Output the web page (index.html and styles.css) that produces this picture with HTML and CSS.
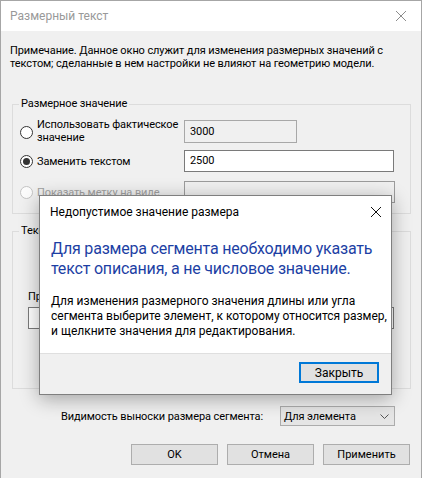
FILE: index.html
```html
<!DOCTYPE html>
<html lang="ru">
<head>
<meta charset="utf-8">
<title>Размерный текст</title>
<link rel="stylesheet" href="styles.css">
</head>
<body>
<div class="window">
  <div class="titlebar">
    <span class="title">Размерный текст</span>
    <svg class="close" width="12" height="12" viewBox="0 0 12 12"><path d="M1 1 L11 11 M11 1 L1 11" /></svg>
  </div>

  <div class="client">
    <p class="note">Примечание. Данное окно служит для изменения размерных значений с<br>текстом; сделанные в нем настройки не влияют на геометрию модели.</p>

    <fieldset class="group group-value">
      <legend>Размерное значение</legend>
      <div class="row row-actual">
        <label class="choice"><span class="radio"></span><span class="choice-text">Использовать фактическое<br>значение</span></label>
        <div class="field field-disabled field-short">3000</div>
      </div>
      <div class="row row-replace">
        <label class="choice"><span class="radio checked"></span><span class="choice-text">Заменить текстом</span></label>
        <div class="field field-wide">2500</div>
      </div>
      <div class="row row-label">
        <label class="choice choice-disabled"><span class="radio disabled"></span><span class="choice-text">Показать метку на виде</span></label>
        <div class="field field-inactive field-wider"></div>
      </div>
    </fieldset>

    <fieldset class="group group-text">
      <legend>Текстовые поля</legend>
      <div class="text-cols">
        <div class="text-col">
          <span class="col-label">Префикс:</span>
          <div class="field"></div>
        </div>
        <div class="text-col">
          <span class="col-label"></span>
          <div class="field field-disabled"></div>
        </div>
        <div class="text-col">
          <span class="col-label"></span>
          <div class="field"></div>
        </div>
      </div>
    </fieldset>

    <div class="leader-row">
      <span class="leader-label">Видимость выноски размера сегмента:</span>
      <div class="combo">
        <span>Для элемента</span>
        <svg class="chevron" width="9" height="5" viewBox="0 0 9 5"><path d="M0.5 0.5 L4.5 4.5 L8.5 0.5" /></svg>
      </div>
    </div>

    <div class="buttons">
      <button class="btn">OK</button>
      <button class="btn">Отмена</button>
      <button class="btn">Применить</button>
    </div>
  </div>

  <div class="modal">
    <div class="modal-head">
      <span class="modal-title">Недопустимое значение размера</span>
      <svg class="modal-close" width="12" height="12" viewBox="0 0 12 12"><path d="M1 1 L11 11 M11 1 L1 11" /></svg>
    </div>
    <div class="modal-body">
      <p class="instruction">Для размера сегмента необходимо указать<br>текст описания, а не числовое значение.</p>
      <p class="detail">Для изменения размерного значения длины или угла<br>сегмента выберите элемент, к которому относится размер,<br>и щелкните значения для редактирования.</p>
    </div>
    <div class="modal-foot">
      <button class="btn btn-default">Закрыть</button>
    </div>
  </div>
</div>
</body>
</html>
```

FILE: styles.css
```css
* {
  box-sizing: border-box;
}

html, body {
  margin: 0;
  padding: 0;
  background: #f0f0f0;
}

body {
  font-family: Roboto, "Liberation Sans", sans-serif;
  font-size: 12px;
  color: #000;
  white-space: nowrap;
}

.window {
  position: relative;
  width: 422px;
  height: 478px;
  border: 1px solid #a6a6a6;
  border-bottom: none;
  background: #f0f0f0;
  overflow: hidden;
}

/* title bar */
.titlebar {
  height: 30px;
  background: #fff;
  display: flex;
  align-items: center;
  justify-content: space-between;
  padding: 0 14px 0 9px;
}

.title {
  color: #999;
  font-size: 12px;
}

.close path,
.modal-close path {
  stroke: #8c8c8c;
  stroke-width: 1;
  fill: none;
}

.modal-close path {
  stroke: #111;
}

/* dialog body: the main dialog uses the smaller 11px face */
.client {
  padding: 13px 0 0 0;
  font-size: 11px;
  letter-spacing: -0.1px;
}

.note {
  margin: 0 0 0 9px;
  line-height: 13px;
  color: #000;
}

.group {
  margin: 27px 10px 0 11px;
  padding: 0;
  border: 1px solid #dcdcdc;
  min-width: 0;
}

.group legend {
  margin-left: 6px;
  padding: 0 2px;
  line-height: 14px;
}

.group-value {
  padding-bottom: 8px;
}

.row {
  display: flex;
  align-items: center;
  height: 26px;
}

.row-actual { margin-top: 7px; }
.row-replace { margin-top: 4px; }
.row-label { margin-top: 5px; }

.choice {
  width: 164px;
  margin-left: 7px;
  display: flex;
  align-items: center;
  gap: 4px;
  line-height: 13px;
}

.choice-disabled {
  color: #a0a0a0;
}

.radio {
  position: relative;
  flex: none;
  width: 13px;
  height: 13px;
  border-radius: 50%;
  border: 1px solid #333;
  background: #fff;
}

.row-actual .radio {
  margin-top: 3px;
}

.radio.checked::after {
  content: "";
  position: absolute;
  left: 2px;
  top: 2px;
  width: 7px;
  height: 7px;
  border-radius: 50%;
  background: #333;
}

.radio.disabled {
  border-color: #c4c4c4;
  background: #fcfcfc;
}

.field {
  height: 22px;
  border: 1px solid #7a7a7a;
  background: #fff;
  padding: 0 5px;
  line-height: 20px;
}

.field-disabled {
  background: #f0f0f0;
  border-color: #a8a8a8;
}

.field-inactive {
  background: #f0f0f0;
  border-color: #9c9c9c;
}

.field-short { width: 113px; height: 23px; line-height: 21px; }
.field-wide { width: 210px; }
.field-wider { width: 211px; }

/* text fields group */
.group-text {
  margin-top: 10px;
  height: 165px;
}

.text-cols {
  display: flex;
  gap: 10px;
  margin: 52px 16px 0 15px;
}

.text-col {
  flex: 1;
  display: flex;
  flex-direction: column;
  gap: 3px;
}

.col-label {
  height: 14px;
  line-height: 14px;
}

.text-col .field {
  width: 100%;
}

/* leader visibility */
.leader-row {
  display: flex;
  justify-content: flex-end;
  align-items: center;
  gap: 17px;
  margin-top: 17px;
  padding-right: 26px;
}

.combo {
  width: 115px;
  height: 20px;
  border: 1px solid #acacac;
  background: #e5e5e5;
  display: flex;
  align-items: center;
  justify-content: space-between;
  padding: 0 5px 0 3px;
}

.chevron path {
  stroke: #555;
  stroke-width: 1;
  fill: none;
}

/* buttons */
.buttons {
  display: flex;
  justify-content: flex-end;
  gap: 9px;
  margin-top: 18px;
  padding-right: 11px;
}

.btn {
  font: inherit;
  color: #000;
  width: 87px;
  height: 21px;
  border: 1px solid #adadad;
  background: #e1e1e1;
  padding: 0;
}

/* message box over the dialog */
.modal {
  position: absolute;
  left: 38px;
  top: 194px;
  width: 353px;
  height: 200px;
  border: 1px solid #7f7f7f;
  background: #fff;
  box-shadow: 0 4px 18px rgba(0, 0, 0, 0.32);
  display: flex;
  flex-direction: column;
  font-size: 12px;
  letter-spacing: 0;
}

.modal-head {
  height: 32px;
  display: flex;
  align-items: center;
  justify-content: space-between;
  padding: 0 9px 0 10px;
}

.modal-body {
  flex: 1;
  padding: 0 10px 0 11px;
}

.instruction {
  margin: 11px 0 0 0;
  font-size: 16px;
  line-height: 20px;
  letter-spacing: -0.2px;
  color: #1d3fa4;
}

.detail {
  margin: 15px 0 0 0;
  line-height: 15px;
}

.modal-foot {
  height: 41px;
  background: #f0f0f0;
  border-top: 1px solid #dfdfdf;
  display: flex;
  justify-content: flex-end;
  align-items: flex-start;
  padding: 8px 12px 0 0;
}

.btn-default {
  width: 80px;
  height: 21px;
  border: 2px solid #0078d7;
  background: #e1e1e1;
}
```
